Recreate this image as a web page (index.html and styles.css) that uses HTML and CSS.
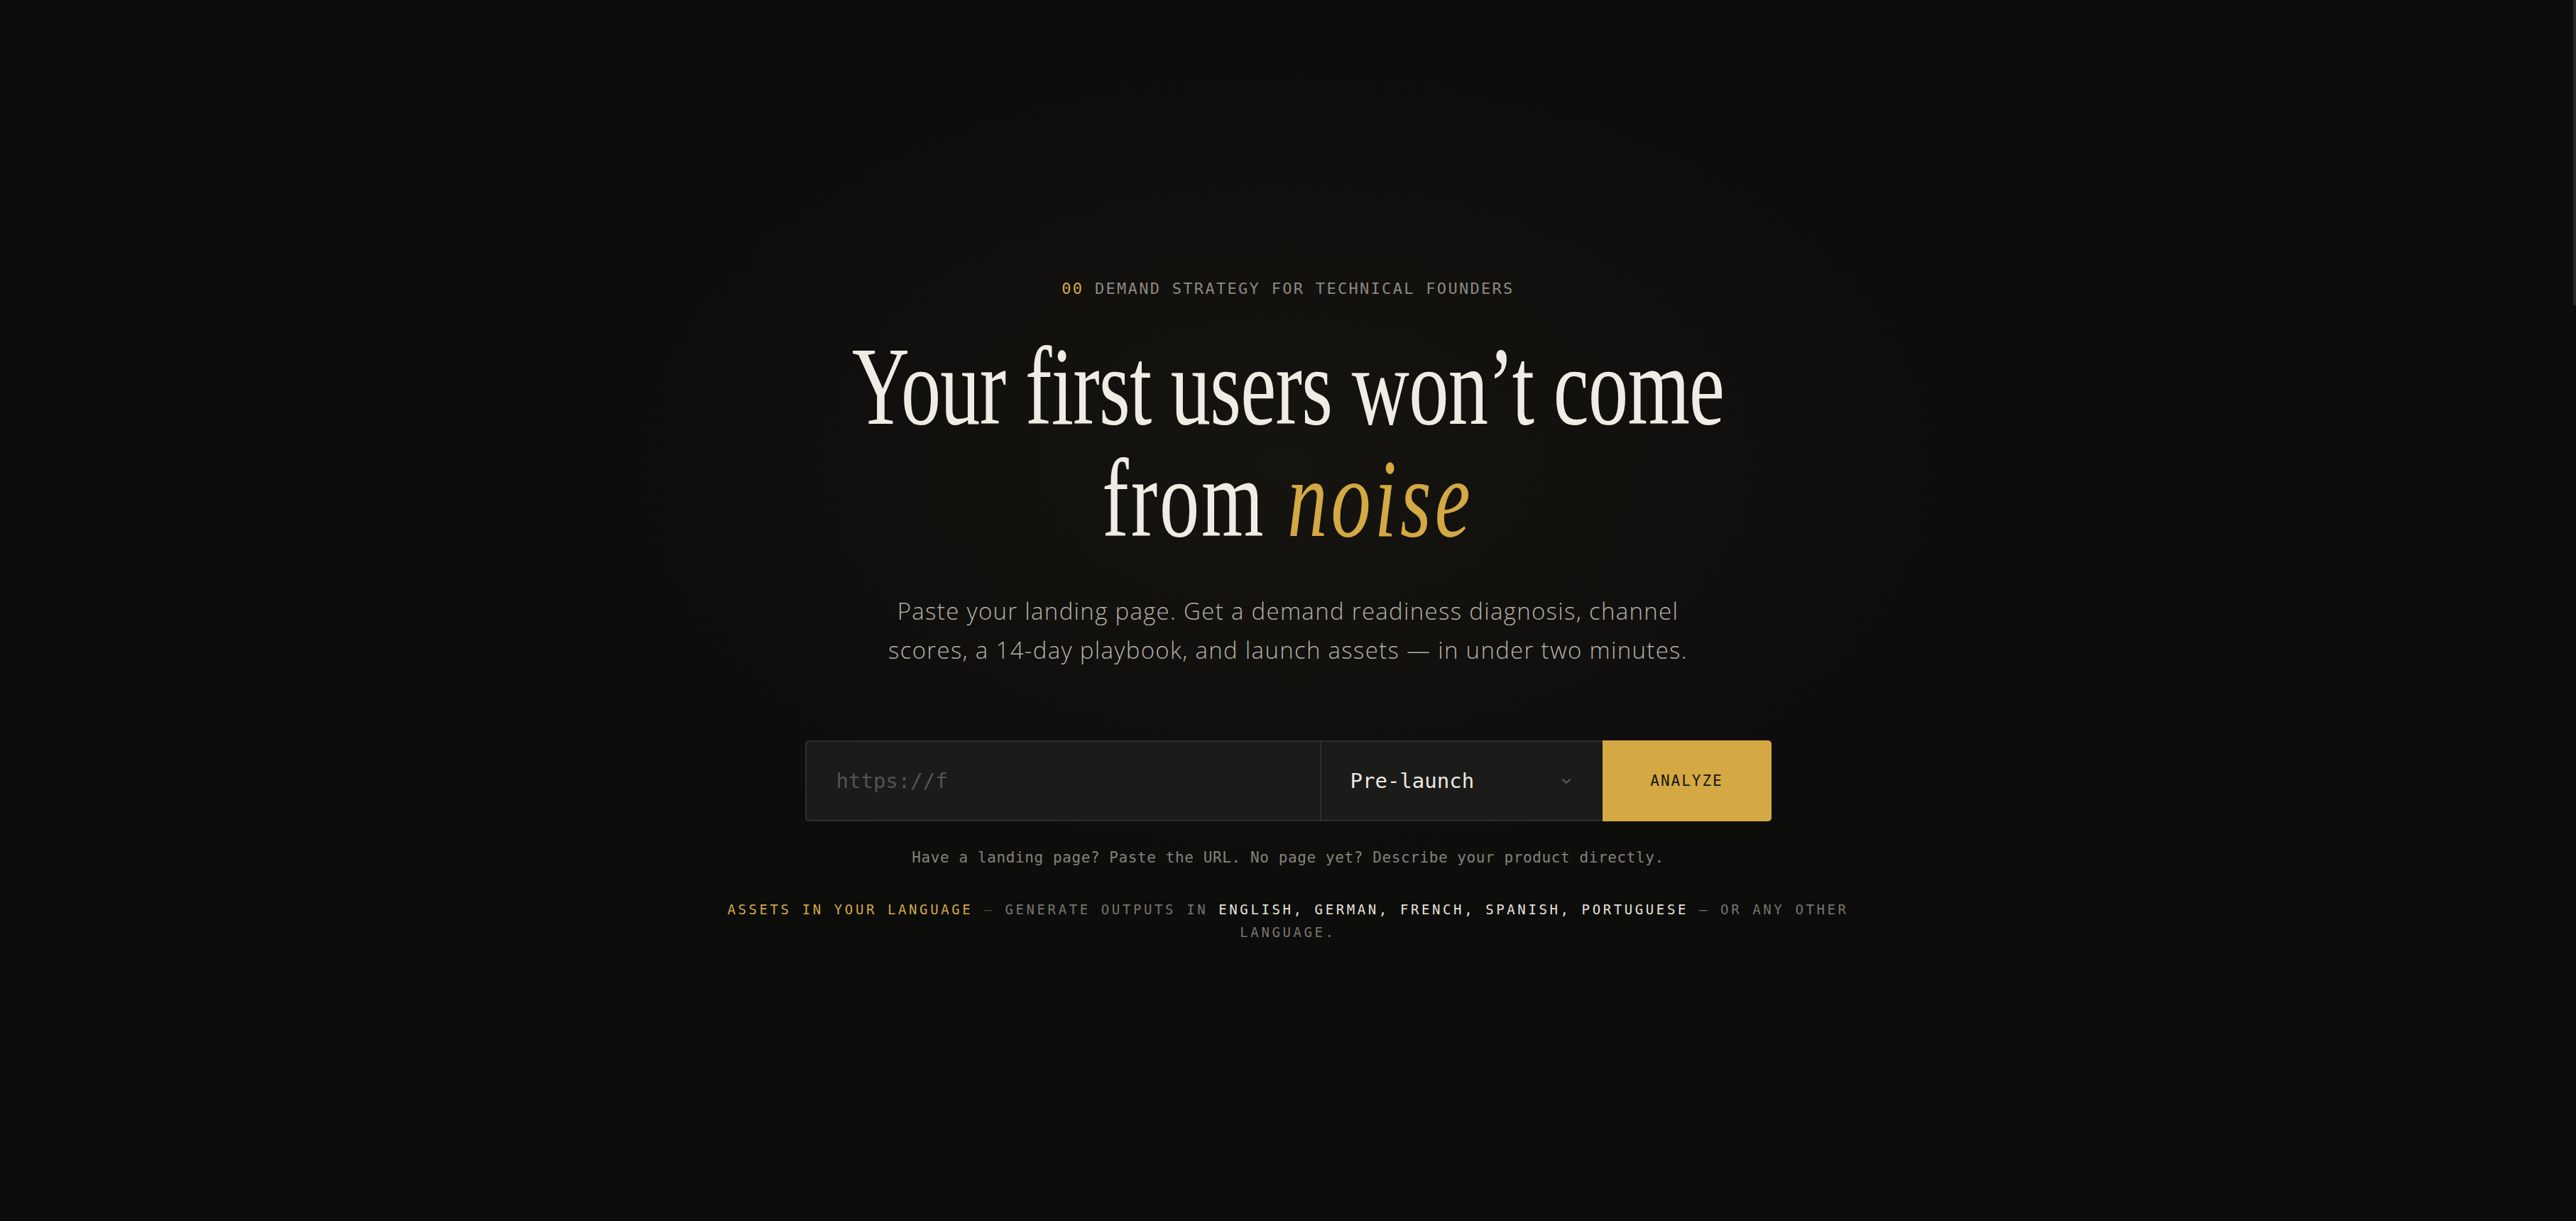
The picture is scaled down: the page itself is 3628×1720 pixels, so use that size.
FILE: index.html
```html
<!DOCTYPE html>
<html lang="en">
<head>
<meta charset="utf-8">
<title>Demand strategy for technical founders</title>
<link rel="stylesheet" href="styles.css">
</head>
<body>
<main class="hero">
  <p class="eyebrow"><span class="num">00</span> DEMAND STRATEGY FOR TECHNICAL FOUNDERS</p>
  <h1 class="title"><span class="line">Your first users won’t come</span><br><span class="line wide">from <em>noise</em></span></h1>
  <p class="lead">Paste your landing page. Get a demand readiness diagnosis, channel scores, a 14-day playbook, and launch assets — in under two minutes.</p>
  <form class="analyze">
    <input class="url" type="text" placeholder="https://f">
    <button type="button" class="stage">
      <span>Pre-launch</span>
      <svg class="chev" width="14" height="9" viewBox="0 0 14 9"><path d="M1.5 1.5 L7 7 L12.5 1.5" fill="none" stroke="#5b5a56" stroke-width="2.2"/></svg>
    </button>
    <button type="button" class="go">ANALYZE</button>
  </form>
  <p class="hint">Have a landing page? Paste the URL. No page yet? Describe your product directly.</p>
  <p class="langs"><span class="gold">ASSETS IN YOUR LANGUAGE</span> <span class="dash">—</span> <span>GENERATE OUTPUTS IN</span> <span class="hl">ENGLISH, GERMAN, FRENCH, SPANISH, PORTUGUESE</span> <span>— OR ANY OTHER</span> <span>LANGUAGE.</span></p>
</main>
<div class="scroll-thumb"></div>
</body>
</html>
```
FILE: styles.css
```css
html, body {
  margin: 0;
  padding: 0;
}
body {
  min-height: 100vh;
  background: radial-gradient(ellipse 1500px 900px at 50% 38%, #15140f 0%, #100f0d 45%, #0c0c0b 80%);
  background-color: #0c0c0b;
  color: #efece4;
  font-family: "DejaVu Sans Mono", monospace;
}
.hero {
  display: flex;
  flex-direction: column;
  align-items: center;
  padding-top: 392px;
}
.eyebrow {
  margin: 0;
  font-family: "DejaVu Sans Mono", monospace;
  font-size: 22px;
  line-height: 30px;
  letter-spacing: 2.3px;
  color: #8c8981;
}
.eyebrow .num {
  color: #d4a843;
}
.title {
  margin: 43px 0 0;
  font-family: "Liberation Serif", serif;
  font-weight: 400;
  font-size: 157px;
  line-height: 158px;
  letter-spacing: -1px;
  white-space: nowrap;
  text-align: center;
  color: #efece4;
  transform: scaleX(0.716);
}
.title .wide {
  letter-spacing: 4px;
}
.title em {
  font-style: italic;
  color: #d4a843;
  letter-spacing: 7px;
}
.lead {
  margin: 52px 0 0;
  max-width: 1160px;
  text-align: center;
  font-family: "Open Sans", sans-serif;
  font-weight: 300;
  font-size: 33px;
  line-height: 55px;
  letter-spacing: 1.3px;
  color: #b3afa7;
}
.analyze {
  margin-top: 100px;
  display: flex;
  width: 1361px;
  height: 114px;
}
.url {
  flex: 1;
  min-width: 0;
  box-sizing: border-box;
  height: 114px;
  margin: 0;
  padding: 0 42px;
  background: #1b1b19;
  border: 2px solid #2d2d2a;
  border-right: none;
  border-radius: 5px 0 0 5px;
  font-family: "DejaVu Sans Mono", monospace;
  font-size: 29px;
  color: #efece4;
  outline: none;
}
.url::placeholder {
  color: #55544f;
}
.stage {
  width: 398px;
  box-sizing: border-box;
  height: 114px;
  margin: 0;
  display: flex;
  align-items: center;
  justify-content: space-between;
  padding: 0 44px 0 41px;
  background: #1b1b19;
  border: 2px solid #2d2d2a;
  border-right: none;
  font-family: "DejaVu Sans Mono", monospace;
  font-size: 29px;
  color: #ebe8e0;
  cursor: pointer;
}
.chev {
  display: block;
}
.go {
  width: 238px;
  height: 114px;
  margin: 0;
  border: none;
  border-radius: 0 5px 5px 0;
  background: #d4a843;
  color: #16140f;
  font-family: "DejaVu Sans Mono", monospace;
  font-size: 21px;
  letter-spacing: 2px;
  cursor: pointer;
}
.hint {
  margin: 36px 0 0;
  font-family: "DejaVu Sans Mono", monospace;
  font-size: 21px;
  line-height: 30px;
  letter-spacing: 0.6px;
  color: #85827b;
}
.langs {
  margin: 42px 0 0;
  max-width: 1640px;
  text-align: center;
  font-family: "DejaVu Sans Mono", monospace;
  font-size: 19px;
  line-height: 32px;
  letter-spacing: 3.6px;
  color: #78756e;
}
.langs .gold {
  color: #d4a843;
}
.langs .dash {
  color: #4a4945;
}
.langs .hl {
  color: #e6e3db;
}
.scroll-thumb {
  position: fixed;
  top: 0;
  right: 0;
  width: 4px;
  height: 430px;
  background: #262624;
}
```
